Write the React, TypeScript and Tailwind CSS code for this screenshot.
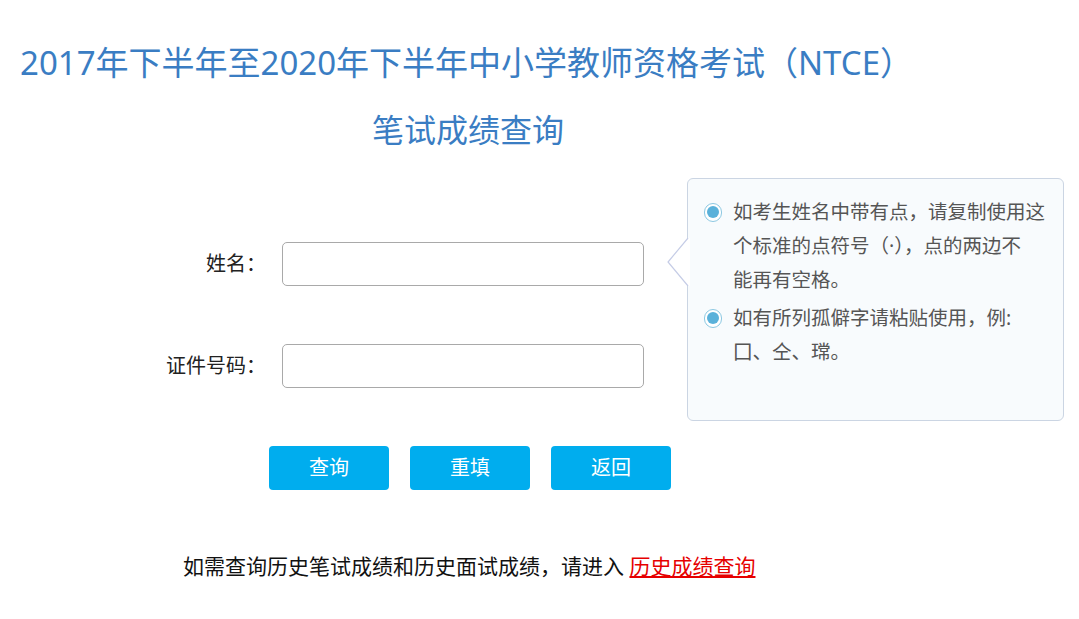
const cjk = "font-['Noto_Sans','Noto_Sans_CJK_SC',sans-serif]";

function Bullet() {
  return (
    <span className="flex h-[34px] w-[18px] shrink-0 items-center justify-center">
      <span className="flex h-[19px] w-[19px] items-center justify-center rounded-full border-[1.5px] border-[#8cc8e2] bg-white">
        <span className="h-[12px] w-[12px] rounded-full bg-[#5ab1da]" />
      </span>
    </span>
  );
}

function Field({ label }: { label: string }) {
  return (
    <div className="flex items-center">
      <label className="w-[266px] shrink-0 text-right text-[20px] text-[#222]">{label}</label>
      <input
        type="text"
        className="ml-[16px] h-[44px] w-[362px] shrink-0 rounded-[5px] border border-[#a9a9a9] bg-white px-2 text-[16px] outline-none"
      />
    </div>
  );
}

export default function App() {
  const buttons = ["查询", "重填", "返回"];

  return (
    <div className={`min-h-[619px] w-[1079px] bg-white ${cjk}`}>
      <h1 className="pl-[20px] pt-[39px] text-[33px] leading-[48px] text-[#3a7dc3]">
        2017年下半年至2020年下半年中小学教师资格考试（NTCE）
      </h1>
      <h2 className="mt-[19px] w-[936px] text-center text-[32px] leading-[48px] text-[#3a7dc3]">
        笔试成绩查询
      </h2>

      <div className="mt-[24px] flex items-start">
        {/* form */}
        <div className="w-[644px] shrink-0 pt-[64px]">
          <Field label="姓名：" />
          <div className="mt-[58px]">
            <Field label="证件号码：" />
          </div>
          <div className="mt-[58px] flex gap-[21px] pl-[269px]">
            {buttons.map((b) => (
              <button
                key={b}
                className="h-[44px] w-[120px] shrink-0 rounded-[4px] bg-[#00adee] text-[20px] text-white"
              >
                {b}
              </button>
            ))}
          </div>
        </div>

        {/* tip */}
        <div className="relative ml-[43px] h-[243px] w-[377px] shrink-0 rounded-[6px] border border-[#cbd5e3] bg-[#f8fbfd] pl-[16px] pt-[16px] text-[19.5px] leading-[34px] text-[#555]">
          <svg
            className="absolute left-[-21px] top-[59px]"
            width="23"
            height="48"
            viewBox="0 0 23 48"
          >
            <polygon points="23,0 21,0 1,24 21,48 23,48" fill="#fff" />
            <polyline points="21,0 1,24 21,48" fill="none" stroke="#c5cce6" strokeWidth="1.2" />
          </svg>
          <div className="flex gap-[11px]">
            <Bullet />
            <p className="whitespace-nowrap">
              如考生姓名中带有点，请复制使用这
              <br />
              个标准的点符号（·），点的两边不
              <br />
              能再有空格。
            </p>
          </div>
          <div className="mt-[4px] flex gap-[11px]">
            <Bullet />
            <p className="whitespace-nowrap">
              如有所列孤僻字请粘贴使用，例:
              <br />
              囗、仝、瑺。
            </p>
          </div>
        </div>
      </div>

      <p className="mt-[61px] pl-[183px] text-[21px] leading-[30px] text-[#111]">
        如需查询历史笔试成绩和历史面试成绩，请进入{" "}
        <a href="#" className="text-[#e60000] underline underline-offset-2">
          历史成绩查询
        </a>
      </p>
    </div>
  );
}
